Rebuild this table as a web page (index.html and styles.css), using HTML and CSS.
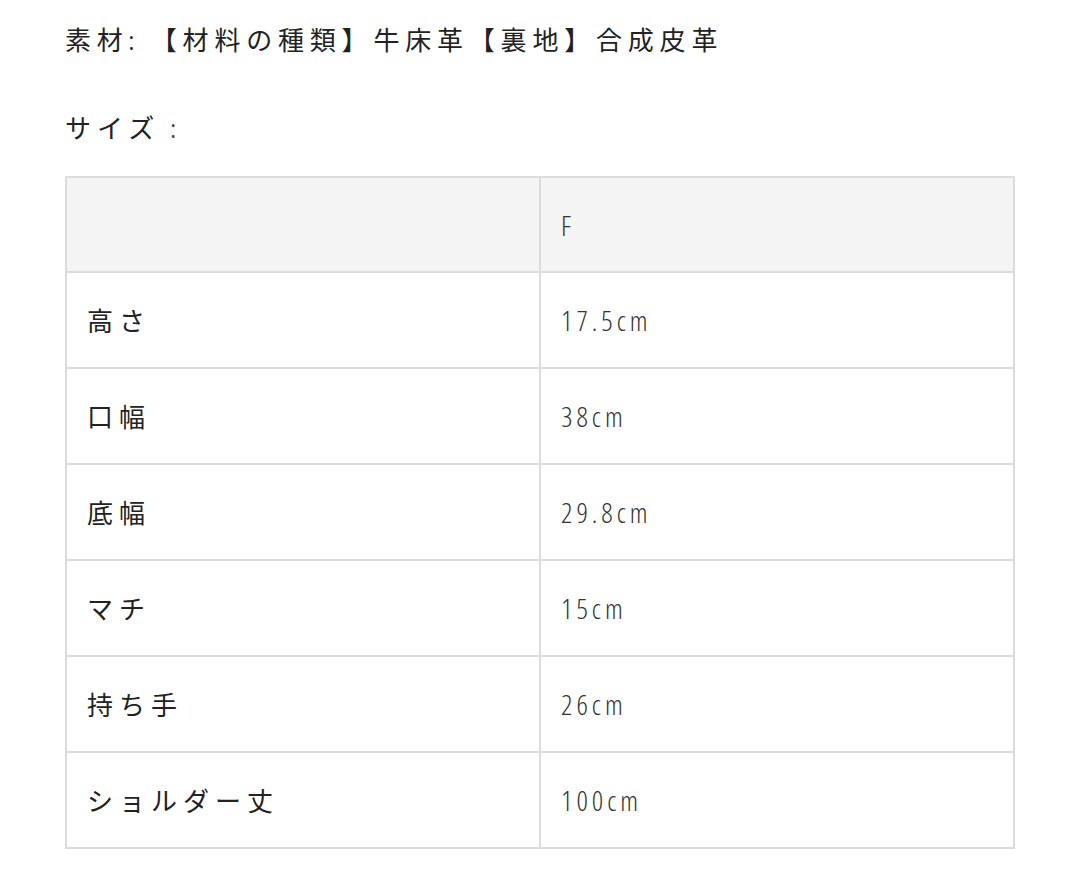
FILE: index.html
```html
<!DOCTYPE html>
<html lang="ja">
<head>
<meta charset="utf-8">
<link rel="stylesheet" href="styles.css">
</head>
<body>
<div class="page">
  <p class="line first">素材: 【材料の種類】牛床革【裏地】合成皮革</p>
  <p class="line second">サイズ<span class="colon">:</span></p>
  <table class="spec">
    <tr class="head"><td class="label"></td><td class="value">F</td></tr>
    <tr><td class="label">高さ</td><td class="value">17.5cm</td></tr>
    <tr><td class="label">口幅</td><td class="value">38cm</td></tr>
    <tr><td class="label">底幅</td><td class="value">29.8cm</td></tr>
    <tr><td class="label">マチ</td><td class="value">15cm</td></tr>
    <tr><td class="label">持ち手</td><td class="value">26cm</td></tr>
    <tr><td class="label">ショルダー丈</td><td class="value">100cm</td></tr>
  </table>
</div>
</body>
</html>
```

FILE: styles.css
```css
html, body {
  margin: 0;
  padding: 0;
  background: #ffffff;
}
.page {
  padding: 20px 65px 0 65px;
  font-family: "Open Sans", "Noto Sans CJK JP", sans-serif;
  color: #222222;
}
.line {
  margin: 0;
  font-size: 26px;
  line-height: 40px;
  letter-spacing: 5.8px;
  font-stretch: condensed;
}
.second {
  margin-top: 48px;
  letter-spacing: 6px;
}
.colon {
  margin-left: 10px;
  color: #444444;
}
.spec {
  margin-top: 28px;
  width: 950px;
  border-collapse: collapse;
  table-layout: fixed;
}
.spec td {
  height: 96px;
  border: 2px solid #dcdcdc;
  padding: 0 0 0 20px;
  vertical-align: middle;
  box-sizing: border-box;
}
.spec .head td {
  height: 95px;
  background: #f4f4f4;
}
.spec .label {
  width: 474px;
  font-size: 26px;
  letter-spacing: 6px;
  color: #222222;
}
.spec .value {
  font-size: 28px;
  font-weight: 300;
  letter-spacing: 4px;
  font-stretch: 75%;
  color: #333333;
}
```
